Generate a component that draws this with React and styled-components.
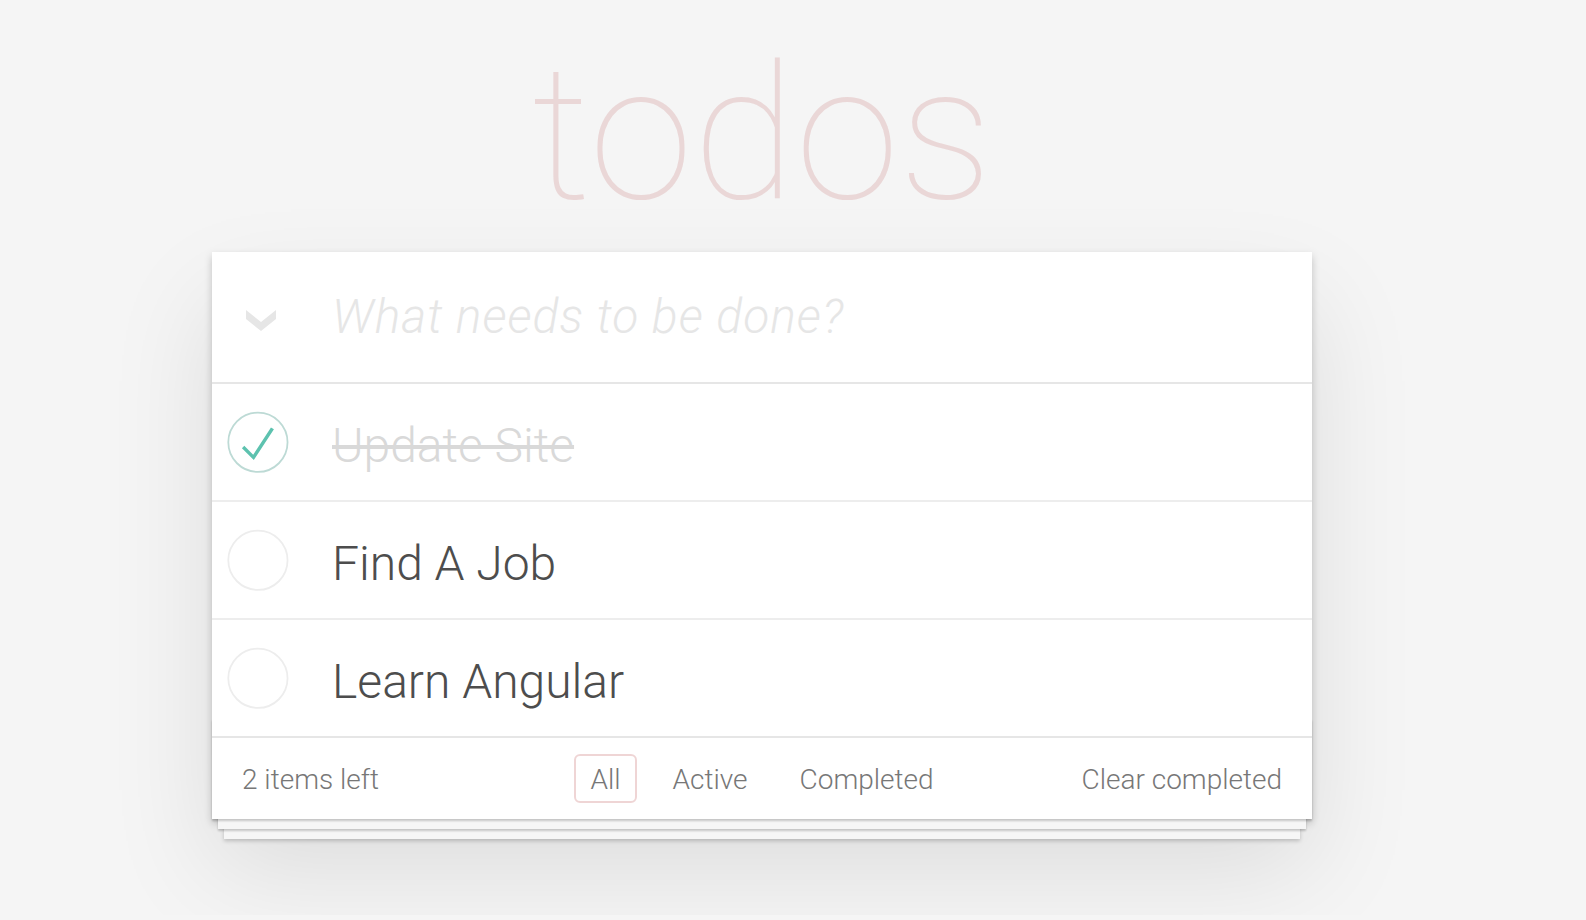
import React, { useState } from 'react';
import styled, { createGlobalStyle } from 'styled-components';

const GlobalStyle = createGlobalStyle`
  html, body {
    margin: 0;
    padding: 0;
  }
  body {
    background: #f5f5f5;
    font-family: Roboto, "Liberation Sans", Arial, sans-serif;
    font-weight: 300;
    color: #4d4d4d;
    -webkit-font-smoothing: antialiased;
  }
`;

const Page = styled.div`
  width: 1100px;
  margin-left: 212px;
  padding-bottom: 96px;
`;

const Title = styled.h1`
  margin: 34px 0 18px;
  height: 200px;
  font-size: 188px;
  line-height: 200px;
  font-weight: 100;
  text-align: center;
  color: rgba(175, 47, 47, 0.15);
  text-rendering: optimizeLegibility;
`;

const Card = styled.section`
  position: relative;
  background: #fff;
  box-shadow: 0 4px 8px 0 rgba(0, 0, 0, 0.2), 0 50px 100px 0 rgba(0, 0, 0, 0.1);
`;

const Header = styled.header`
  display: flex;
  align-items: center;
  height: 130px;
`;

const ToggleAll = styled.label`
  display: flex;
  align-items: center;
  box-sizing: border-box;
  width: 120px;
  padding: 6px 0 0 34px;
  cursor: pointer;
`;

const NewTodo = styled.input`
  flex: 1;
  min-width: 0;
  border: none;
  outline: none;
  background: transparent;
  padding: 0 32px 0 0;
  font-family: inherit;
  font-size: 48px;
  font-weight: 300;
  line-height: 1.4;
  color: #4d4d4d;

  &::placeholder {
    font-style: italic;
    font-weight: 300;
    letter-spacing: 1px;
    color: #e6e6e6;
  }
`;

const List = styled.ul`
  margin: 0;
  padding: 0;
  list-style: none;
  border-top: 2px solid #e6e6e6;
`;

const Item = styled.li`
  display: flex;
  align-items: center;
  height: 116px;
  border-bottom: 2px solid #ededed;

  &:last-child {
    border-bottom: none;
  }
`;

const Toggle = styled.span`
  display: flex;
  width: 80px;
  height: 80px;
  cursor: pointer;
`;

const ItemLabel = styled.label`
  margin-left: 40px;
  padding-top: 8px;
  font-size: 48px;
  line-height: 1.2;
  word-break: break-all;
  color: ${(p) => (p.$done ? '#d9d9d9' : '#4d4d4d')};
  text-decoration: ${(p) => (p.$done ? 'line-through' : 'none')};
`;

const Footer = styled.footer`
  position: relative;
  display: grid;
  grid-template-columns: 1fr auto 1fr;
  align-items: center;
  height: 81px;
  padding: 0 30px;
  border-top: 2px solid #e6e6e6;
  font-size: 28px;
  color: #777;

  &::before {
    content: '';
    position: absolute;
    right: 0;
    bottom: 0;
    left: 0;
    height: 100px;
    overflow: hidden;
    box-shadow: 0 2px 2px rgba(0, 0, 0, 0.2),
      0 16px 0 -6px #f6f6f6,
      0 18px 2px -6px rgba(0, 0, 0, 0.2),
      0 32px 0 -12px #f6f6f6,
      0 34px 4px -12px rgba(0, 0, 0, 0.2);
  }
`;

const Count = styled.span`
  justify-self: start;
  padding-top: 1px;
`;

const Filters = styled.ul`
  display: flex;
  gap: 20px;
  margin: 0;
  padding: 0;
  list-style: none;
`;

const FilterLink = styled.a`
  display: block;
  padding: 8px 14px 5px;
  border: 2px solid ${(p) => (p.$selected ? 'rgba(175, 47, 47, 0.2)' : 'transparent')};
  border-radius: 6px;
  line-height: 32px;
  color: inherit;
  text-decoration: none;
  cursor: pointer;
`;

const ClearButton = styled.button`
  justify-self: end;
  position: relative;
  z-index: 1;
  margin: 0;
  padding: 1px 0 0;
  border: none;
  background: none;
  font: inherit;
  color: inherit;
  cursor: pointer;
`;

const Chevron = () => (
  <svg width="30" height="21" viewBox="0 0 30 21">
    <polygon points="0,0 15,12 30,0 30,9 15,21 0,9" fill="#e6e6e6" />
  </svg>
);

const CheckCircle = ({ done }) => (
  <svg width="80" height="80" viewBox="-10 -18 100 135">
    <circle cx="50" cy="50" r="50" fill="none" stroke={done ? '#bddad5' : '#ededed'} strokeWidth="3" />
    {done && <path fill="#5dc2af" d="M72 25L42 71 27 56l-4 4 20 20 34-52z" />}
  </svg>
);

const initialTodos = [
  { id: 1, title: 'Update Site', done: true },
  { id: 2, title: 'Find A Job', done: false },
  { id: 3, title: 'Learn Angular', done: false },
];

export default function App() {
  const [todos, setTodos] = useState(initialTodos);
  const [filter, setFilter] = useState('all');
  const [text, setText] = useState('');

  const left = todos.filter((t) => !t.done).length;

  const toggle = (id) =>
    setTodos(todos.map((t) => (t.id === id ? { ...t, done: !t.done } : t)));

  const toggleAll = () => {
    const all = todos.every((t) => t.done);
    setTodos(todos.map((t) => ({ ...t, done: !all })));
  };

  const onKeyDown = (e) => {
    if (e.key === 'Enter' && text.trim()) {
      setTodos([...todos, { id: Date.now(), title: text.trim(), done: false }]);
      setText('');
    }
  };

  const shown = todos.filter((t) =>
    filter === 'active' ? !t.done : filter === 'completed' ? t.done : true
  );

  return (
    <>
      <GlobalStyle />
      <Page>
        <Title>todos</Title>
        <Card>
          <Header>
            <ToggleAll onClick={toggleAll}>
              <Chevron />
            </ToggleAll>
            <NewTodo
              placeholder="What needs to be done?"
              value={text}
              onChange={(e) => setText(e.target.value)}
              onKeyDown={onKeyDown}
            />
          </Header>
          <List>
            {shown.map((t) => (
              <Item key={t.id}>
                <Toggle onClick={() => toggle(t.id)}>
                  <CheckCircle done={t.done} />
                </Toggle>
                <ItemLabel $done={t.done}>{t.title}</ItemLabel>
              </Item>
            ))}
          </List>
          <Footer>
            <Count>{left} {left === 1 ? 'item' : 'items'} left</Count>
            <Filters>
              <li><FilterLink $selected={filter === 'all'} onClick={() => setFilter('all')}>All</FilterLink></li>
              <li><FilterLink $selected={filter === 'active'} onClick={() => setFilter('active')}>Active</FilterLink></li>
              <li><FilterLink $selected={filter === 'completed'} onClick={() => setFilter('completed')}>Completed</FilterLink></li>
            </Filters>
            <ClearButton onClick={() => setTodos(todos.filter((t) => !t.done))}>
              Clear completed
            </ClearButton>
          </Footer>
        </Card>
      </Page>
    </>
  );
}
